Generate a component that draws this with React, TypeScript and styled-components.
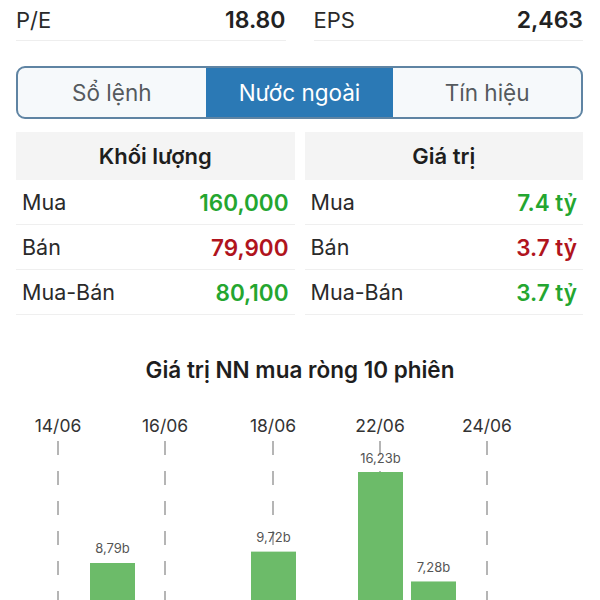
import React from "react";
import styled, { createGlobalStyle } from "styled-components";

const Global = createGlobalStyle`
  html, body { margin: 0; padding: 0; background: #ffffff; }
  body { font-family: Inter, "Noto Sans", "DejaVu Sans", sans-serif; color: #222; }
`;

const Page = styled.div`
  width: 600px;
  display: flex;
  flex-direction: column;
`;

const Section = styled.div`
  padding: 0 17px 0 16px;
`;

const StatsGrid = styled.div`
  display: grid;
  grid-template-columns: 1fr 1fr;
  column-gap: 28px;
`;

const StatRow = styled.div`
  height: 40px;
  display: flex;
  align-items: center;
  justify-content: space-between;
  border-bottom: 1px solid #eeeeee;
  font-size: 22px;
`;

const StatLabel = styled.span`
  color: #2a2a2a;
  font-weight: 400;
`;

const StatValue = styled.span`
  color: #222;
  font-weight: 600;
  font-size: 23px;
`;

const Segmented = styled.div`
  margin-top: 25px;
  height: 53px;
  box-sizing: border-box;
  border: 2px solid #5f84a3;
  border-radius: 9px;
  overflow: hidden;
  display: grid;
  grid-template-columns: 1fr 1fr 1fr;
  background: #f6f9fb;
`;

const Segment = styled.div<{ $active?: boolean }>`
  display: flex;
  align-items: center;
  justify-content: center;
  font-size: 22.5px;
  color: ${(p) => (p.$active ? "#ffffff" : "#555a5e")};
  background: ${(p) => (p.$active ? "#2b79b5" : "transparent")};
`;

const Tables = styled.div`
  margin-top: 13px;
  display: grid;
  grid-template-columns: 1fr 1fr;
  column-gap: 10px;
`;

const Table = styled.div`
  display: flex;
  flex-direction: column;
`;

const TableHead = styled.div`
  height: 48px;
  background: #f4f4f4;
  display: flex;
  align-items: center;
  justify-content: center;
  font-size: 22px;
  font-weight: 600;
  color: #1e1e1e;
`;

const TableRow = styled.div`
  height: 45px;
  box-sizing: border-box;
  border-bottom: 1px solid #efefef;
  display: flex;
  align-items: center;
  justify-content: space-between;
  padding: 0 6px;
  font-size: 21.5px;
`;

const RowLabel = styled.span`
  color: #2a2a2a;
`;

const RowValue = styled.span<{ $tone: "up" | "down" }>`
  font-weight: 600;
  font-size: 22.5px;
  color: ${(p) => (p.$tone === "up" ? "#24a630" : "#b0141d")};
`;

const ChartTitle = styled.div`
  margin-top: 43px;
  text-align: center;
  font-size: 22.5px;
  line-height: 24px;
  font-weight: 600;
  color: #1e1e1e;
`;

const ChartSvg = styled.svg`
  display: block;
  width: 600px;
  height: 230px;
`;

const volume = [
  { label: "Mua", value: "160,000", tone: "up" as const },
  { label: "Bán", value: "79,900", tone: "down" as const },
  { label: "Mua-Bán", value: "80,100", tone: "up" as const },
];

const worth = [
  { label: "Mua", value: "7.4 tỷ", tone: "up" as const },
  { label: "Bán", value: "3.7 tỷ", tone: "down" as const },
  { label: "Mua-Bán", value: "3.7 tỷ", tone: "up" as const },
];

const dates = [
  { x: 58, label: "14/06" },
  { x: 165, label: "16/06" },
  { x: 273, label: "18/06" },
  { x: 380, label: "22/06" },
  { x: 487, label: "24/06" },
];

// svg top = page y 382
const ZERO = 288.5;
const SCALE = 12.23;
const bars = [
  { cx: 112.5, v: 8.79, text: "8,79b" },
  { cx: 273.5, v: 9.72, text: "9,72b" },
  { cx: 380.5, v: 16.23, text: "16,23b" },
  { cx: 433.5, v: 7.28, text: "7,28b" },
];

export default function App() {
  return (
    <Page>
      <Global />
      <Section>
        <StatsGrid>
          <StatRow>
            <StatLabel>P/E</StatLabel>
            <StatValue>18.80</StatValue>
          </StatRow>
          <StatRow>
            <StatLabel>EPS</StatLabel>
            <StatValue>2,463</StatValue>
          </StatRow>
        </StatsGrid>

        <Segmented>
          <Segment>Sổ lệnh</Segment>
          <Segment $active>Nước ngoài</Segment>
          <Segment>Tín hiệu</Segment>
        </Segmented>

        <Tables>
          <Table>
            <TableHead>Khối lượng</TableHead>
            {volume.map((r) => (
              <TableRow key={r.label}>
                <RowLabel>{r.label}</RowLabel>
                <RowValue $tone={r.tone}>{r.value}</RowValue>
              </TableRow>
            ))}
          </Table>
          <Table>
            <TableHead>Giá trị</TableHead>
            {worth.map((r) => (
              <TableRow key={r.label}>
                <RowLabel>{r.label}</RowLabel>
                <RowValue $tone={r.tone}>{r.value}</RowValue>
              </TableRow>
            ))}
          </Table>
        </Tables>
      </Section>

      <ChartTitle>Giá trị NN mua ròng 10 phiên</ChartTitle>

      <ChartSvg viewBox="0 0 600 230">
        {dates.map((d) => (
          <g key={d.label}>
            <text
              x={d.x}
              y={49.5}
              textAnchor="middle"
              fontSize="17.5"
              fill="#333"
              fontFamily="Inter, sans-serif"
            >
              {d.label}
            </text>
            <line
              x1={d.x}
              x2={d.x}
              y1={59}
              y2={230}
              stroke="#b5b5b5"
              strokeWidth={2}
              strokeDasharray="14 16"
            />
          </g>
        ))}
        {bars.map((b) => {
          const top = ZERO - b.v * SCALE;
          return (
            <g key={b.text}>
              <text
                x={b.cx}
                y={top - 9.5}
                textAnchor="middle"
                fontSize="13"
                fill="#555"
                fontFamily="Inter, sans-serif"
              >
                {b.text}
              </text>
              <rect x={b.cx - 22.5} y={top} width={45} height={230 - top} fill="#6cbb69" />
            </g>
          );
        })}
      </ChartSvg>
    </Page>
  );
}
